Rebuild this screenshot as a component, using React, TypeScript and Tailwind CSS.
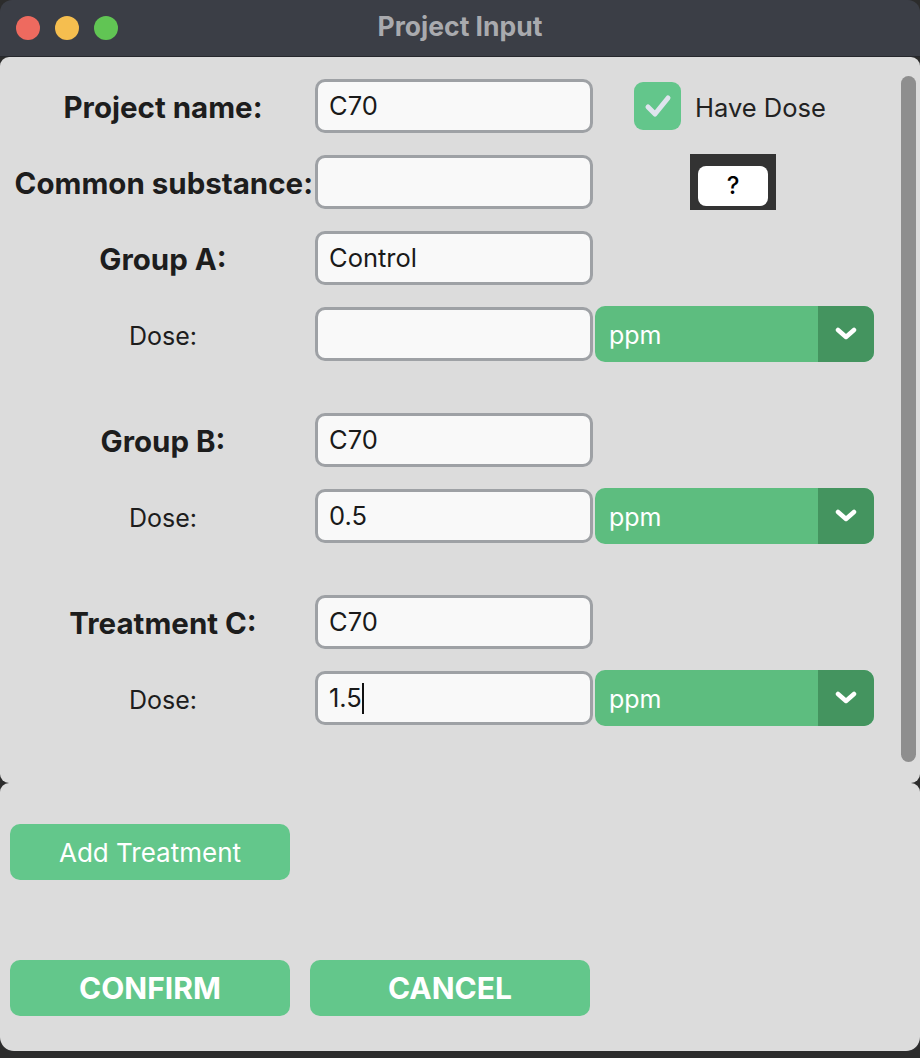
import React from 'react'

const font = { fontFamily: 'Inter, "Noto Sans", sans-serif' }

function Field({ value, caret }: { value?: string; caret?: boolean }) {
    return (
        <div className='ml-[2px] w-[278px] h-[54px] border-[3px] border-[#9ea1a5] rounded-[10px] bg-[#f9f9f9] flex items-center pl-[11px] text-[25.5px] text-[#1a1a1a]'>
            <span>{value}</span>
            {caret && <span className='w-[2px] h-[31px] bg-[#111]'></span>}
        </div>
    )
}

function Label({ text, bold }: { text: string; bold?: boolean }) {
    return (
        <div
            className={
                bold
                    ? 'ml-[13px] w-[300px] text-center text-[29.5px] font-bold text-[#1d1d1d] whitespace-nowrap pt-[3px]'
                    : 'ml-[13px] w-[300px] text-center text-[25px] text-[#1d1d1d] whitespace-nowrap pt-[6px]'
            }
        >
            {text}
        </div>
    )
}

function Unit() {
    return (
        <div className='ml-[2px] -my-[1px] w-[279px] h-[56px] rounded-[10px] bg-[#5dbd7f] flex overflow-hidden'>
            <div className='flex-1 flex items-center pl-[14px] pt-[4px] text-[25px] text-white'>ppm</div>
            <div className='w-[56px] bg-[#44945f] flex items-center justify-center'>
                <svg width='22' height='14' viewBox='0 0 22 14'>
                    <path d='M3 3 L11 10 L19 3' fill='none' stroke='white' strokeWidth='4.5' strokeLinecap='round' strokeLinejoin='round' />
                </svg>
            </div>
        </div>
    )
}

function Group({ name, value, dose, top }: { name: string; value: string; dose: string; top: string }) {
    return (
        <div className={'flex flex-col gap-[22px] ' + top}>
            <div className='flex items-center'>
                <Label text={name} bold />
                <Field value={value} />
            </div>
            <div className='flex items-center'>
                <Label text='Dose:' />
                <Field value={dose} caret={dose === '1.5'} />
                <Unit />
            </div>
        </div>
    )
}

export default function App() {
    return (
        <div className='w-[920px] h-[1058px] bg-[#2c2c2c] overflow-hidden' style={font}>
            <div className='h-[1051px] rounded-[12px] overflow-hidden bg-[#3b3e46] flex flex-col'>
                {/* title bar */}
                <div className='h-[57px] shrink-0 grid grid-cols-[1fr_auto_1fr] items-center border-b border-[#26282d]'>
                    <div className='flex gap-[15px] pl-[16px]'>
                        <div className='w-[24px] h-[24px] rounded-full bg-[#ee6a5f]'></div>
                        <div className='w-[24px] h-[24px] rounded-full bg-[#f5be4f]'></div>
                        <div className='w-[24px] h-[24px] rounded-full bg-[#61c554]'></div>
                    </div>
                    <div className='text-[26.5px] font-bold text-[#a9aaae] pb-[3px]'>Project Input</div>
                    <div></div>
                </div>

                <div className='flex-1 flex flex-col bg-[#2c2c2c]'>
                    {/* scroll frame */}
                    <div className='h-[726px] shrink-0 rounded-[9px] bg-[#dcdcdc] flex'>
                        <div className='flex-1 pt-[22px] flex flex-col'>
                            <div className='flex flex-col gap-[22px]'>
                                <div className='flex items-center'>
                                    <Label text='Project name:' bold />
                                    <Field value='C70' />
                                    <div className='ml-[41px] w-[47px] h-[48px] rounded-[9px] bg-[#63c68b] flex items-center justify-center'>
                                        <svg width='30' height='26' viewBox='0 0 30 26'>
                                            <path d='M5 14 L12 21 L25 5' fill='none' stroke='#dfe4ee' strokeWidth='5' strokeLinecap='round' strokeLinejoin='round' />
                                        </svg>
                                    </div>
                                    <div className='ml-[14px] text-[25.5px] text-[#222] pt-[5px]'>Have Dose</div>
                                </div>
                                <div className='flex items-center'>
                                    <div className='ml-[13px] w-[300px] text-[29.5px] font-bold text-[#1d1d1d] whitespace-nowrap text-right pt-[3px]'>Common substance:</div>
                                    <Field />
                                    <div className='ml-[97px] -my-[1px] bg-[#333333] pt-[12px] pb-[4px] px-[8px]'>
                                        <div className='w-[70px] h-[40px] rounded-[8px] bg-white flex items-center justify-center text-[24px] font-medium text-black'>?</div>
                                    </div>
                                </div>
                            </div>
                            <Group name='Group A:' value='Control' dose='' top='mt-[22px]' />
                            <Group name='Group B:' value='C70' dose='0.5' top='mt-[52px]' />
                            <Group name='Treatment C:' value='C70' dose='1.5' top='mt-[52px]' />
                        </div>
                        <div className='w-[19px] pt-[19px]'>
                            <div className='w-[15px] h-[686px] rounded-full bg-[#8e8e8e]'></div>
                        </div>
                    </div>

                    {/* buttons frame */}
                    <div className='flex-1 rounded-t-[9px] rounded-b-[14px] bg-[#dcdcdc] px-[10px] pt-[41px] flex flex-col'>
                        <button className='w-[280px] h-[56px] rounded-[10px] bg-[#63c78b] text-white text-[26px]'>Add Treatment</button>
                        <div className='flex gap-[20px] mt-[80px]'>
                            <button className='w-[280px] h-[56px] rounded-[10px] bg-[#63c78b] text-white text-[30px] font-bold'>CONFIRM</button>
                            <button className='w-[280px] h-[56px] rounded-[10px] bg-[#63c78b] text-white text-[30px] font-bold'>CANCEL</button>
                        </div>
                    </div>
                </div>
            </div>
        </div>
    )
}
